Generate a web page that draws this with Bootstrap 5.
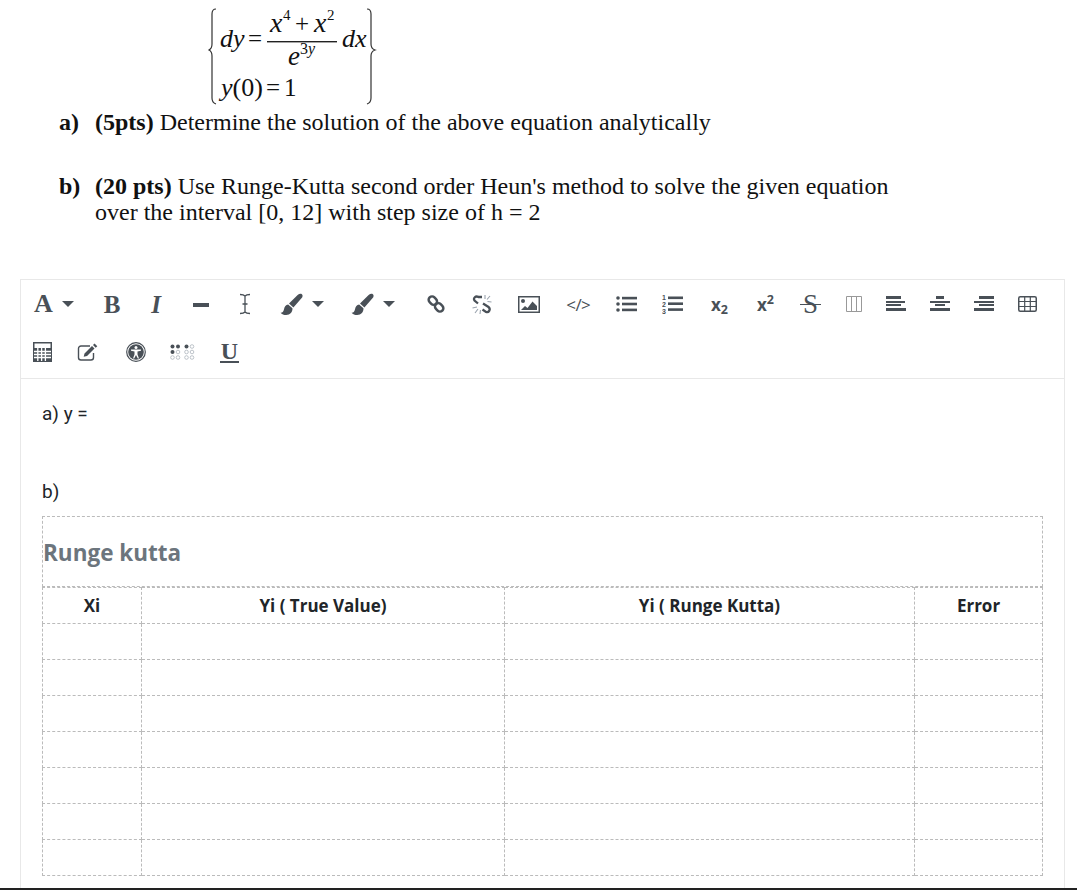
<!DOCTYPE html>
<html lang="en">
<head>
<meta charset="utf-8">
<title>Runge Kutta question</title>
<link href="https://cdn.jsdelivr.net/npm/bootstrap@5.3.0/dist/css/bootstrap.min.css" rel="stylesheet">
<style>
html,body{height:890px;overflow:hidden;background:#fff}
body{font-family:"Open Sans",sans-serif;color:#212529;display:flex;flex-direction:column}
.eq-svg{display:block;margin-left:200px;width:190px;height:108px;flex:none}
.eq-svg text{font-family:"Liberation Serif",serif;fill:#111}
.eq-i{font-style:italic}
.q-item{font-family:"Liberation Serif",serif;font-size:24px;line-height:26px;color:#111;margin-left:59px;width:850px;display:flex}
.q-label{width:36px;flex:none;font-weight:700}
.q-a{margin-top:1px;margin-bottom:38px}
.q-b{margin-bottom:54px}
.editor-box{margin-left:20px;width:1045px;flex:1 1 auto;border:1px solid #e8e8e8;border-bottom:0;min-height:0}
.tool-bar{height:99px;border-bottom:1px solid #e8e8e8;align-content:flex-start}
.tool-btn{height:48px;background:none;border:0;padding:0;color:#495057;display:flex;align-items:center;justify-content:center;gap:9px}
.tool-btn svg{display:block;fill:currentColor}
.w43{width:43.5px}.w42{width:42px}.w44{width:44px}.w45{width:45px}.w46{width:46.5px}.w47{width:47px}.w48{width:48.5px}.w49{width:49.5px}.w66{width:66px}.w72{width:72px}.w70{width:70px}
.w4-gap{margin-right:4px}.w3-gap{margin-right:3px}
.tool-caret{width:0;height:0;border-left:6px solid transparent;border-right:6px solid transparent;border-top:6px solid currentColor}
.serif-glyph{font-family:"Liberation Serif",serif;font-size:25px;font-weight:700;line-height:1}
.serif-a{font-size:26px}
.serif-i{font-style:italic}
.serif-u{font-size:24px;border-bottom:2px solid currentColor;line-height:19px;padding:0 1px}
.strike-glyph{position:relative;font-family:"Liberation Serif",serif;font-size:27px;line-height:1;padding:0 3px}
.strike-glyph::after{content:"";position:absolute;left:0;right:0;top:50%;height:1px;background:currentColor}
.code-glyph{font-family:"Open Sans",sans-serif;font-size:17px;line-height:1;letter-spacing:-.5px}
.sup-glyph{font-family:"Open Sans",sans-serif;font-weight:700;font-size:17px;line-height:1}
.sup-glyph sub,.sup-glyph sup{font-size:12.5px}
.editor-body{padding:21px 21px 0;font-family:Roboto,sans-serif;font-size:19px}
.answer-a{line-height:28px;margin-bottom:50px}
.answer-b{line-height:28px;margin-bottom:10px}
.tbl-wrap{width:1001px}
.tbl-title{font-family:"Open Sans",sans-serif;font-size:22.500px;font-weight:700;color:#6c757d;margin:0;height:71px;line-height:72px;border:1px dashed #bbb}
.sheet{width:1000px;margin:0;table-layout:fixed;border-collapse:collapse}
.sheet th,.sheet td{font-family:"Open Sans",sans-serif;border:1px dashed #bbb;height:36px;padding:0;text-align:center;font-size:17px;font-weight:700;color:#212529;vertical-align:middle}
.col-x{width:99px}.col-t{width:363px}.col-r{width:410px}.col-e{width:128px}
.page-rule{height:2px;background:#222;flex:none}
</style>
</head>
<body>
<svg class="eq-svg" viewBox="200 0 190 108" role="img" aria-label="Initial value problem">
  <g fill="none" stroke="#333" stroke-width="1.2">
    <path d="M216 9c-3 0-4 2-4 5v30c0 3-1 5-3 6 2 1 3 3 3 6v42c0 3 1 5 4 6"/>
    <path d="M367 9c3 0 4 2 4 5v30c0 3 1 5 4 6-3 1-4 3-4 6v42c0 3-1 5-4 6"/>
  </g>
  <text x="220" y="47" font-size="26" class="eq-i">dy</text>
  <text x="248" y="47" font-size="25">=</text>
  <rect x="267" y="41" width="70" height="1.400" fill="#222"/>
  <text x="270" y="32" font-size="28" class="eq-i">x</text>
  <text x="283" y="20" font-size="15">4</text>
  <text x="295" y="32" font-size="25">+</text>
  <text x="314" y="32" font-size="28" class="eq-i">x</text>
  <text x="327" y="20" font-size="15">2</text>
  <text x="288" y="65" font-size="27" class="eq-i">e</text>
  <text x="300" y="54" font-size="16">3<tspan class="eq-i">y</tspan></text>
  <text x="342" y="47" font-size="26" class="eq-i">dx</text>
  <text x="221" y="96" font-size="26"><tspan class="eq-i">y</tspan>(0)</text>
  <text x="266" y="96" font-size="25">=</text>
  <text x="284" y="96" font-size="25">1</text>
</svg>

<div class="q-item q-a"><div class="q-label">a)</div><div><b>(5pts)</b> Determine the solution of the above equation analytically</div></div>
<div class="q-item q-b"><div class="q-label">b)</div><div><b>(20 pts)</b> Use Runge-Kutta second order Heun's method to solve the given equation<br>over the interval [0, 12] with step size of h = 2</div></div>

<div class="editor-box">
  <div class="tool-bar d-flex flex-wrap">
    <button class="tool-btn w66 w3-gap" type="button" aria-label="Font"><span class="serif-glyph serif-a">A</span><span class="tool-caret"></span></button>
    <button class="tool-btn w44" type="button"><span class="serif-glyph">B</span></button>
    <button class="tool-btn w44" type="button"><span class="serif-glyph serif-i">I</span></button>
    <button class="tool-btn w45" type="button" aria-label="Line"><svg width="16" height="16" viewBox="0 0 16 16"><rect x="0" y="7" width="16" height="4"/></svg></button>
    <button class="tool-btn w44" type="button" aria-label="Cursor"><svg width="12" height="22" viewBox="0 0 12 22"><path d="M1 1.500c2 0 4 .3 5 1.500 1-1.200 3-1.500 5-1.500M1 20.500c2 0 4-.3 5-1.500 1 1.200 3 1.500 5 1.500M6 3v16M3.500 11h5" fill="none" stroke="currentColor" stroke-width="1.300"/></svg></button>
    <button class="tool-btn w70" type="button" aria-label="Text colour"><svg width="23" height="23" viewBox="0 0 24 24"><path d="M22.800 1.200c1.200 1 .9 2.800-.2 4.100L14 15 9.400 11l9-8.800c1.400-1.300 3.100-1.900 4.400-1z"/><path d="M8.500 12l4.500 4c.3 3.600-2.400 7-6.600 7-2.300 0-4.500-1-5.800-2.500 2.300.1 3-1.300 3.500-3.300.6-2.700 1.900-5.200 4.400-5.200z"/></svg><span class="tool-caret"></span></button>
    <button class="tool-btn w72 w4-gap" type="button" aria-label="Background colour"><svg width="23" height="23" viewBox="0 0 24 24"><path d="M22.800 1.200c1.200 1 .9 2.800-.2 4.100L14 15 9.400 11l9-8.800c1.400-1.300 3.100-1.900 4.400-1z"/><path d="M8.500 12l4.500 4c.3 3.600-2.400 7-6.600 7-2.300 0-4.500-1-5.800-2.500 2.300.1 3-1.300 3.500-3.300.6-2.700 1.900-5.200 4.400-5.200z"/></svg><span class="tool-caret"></span></button>
    <button class="tool-btn w45" type="button" aria-label="Link"><svg width="18" height="18" viewBox="0 0 20 20"><g fill="none" stroke="currentColor" stroke-width="2.800"><rect x="1.500" y="2.500" width="10" height="7.500" rx="3.700" transform="rotate(45 6.500 6.250)"/><rect x="8.500" y="10" width="10" height="7.500" rx="3.700" transform="rotate(45 13.500 13.750)"/></g></svg></button>
    <button class="tool-btn w47" type="button" aria-label="Unlink"><svg width="20" height="20" viewBox="0 0 20 20"><g fill="none" stroke="currentColor" stroke-width="2.300"><path d="M10 3H6.500C3.500 1.500 1 4 2.500 6.500L6 9.500"/><path d="M11 9.500l5.500 3.500c2.500 2 .5 6-2.500 5l-3.500-2.500"/></g><g stroke="#9aa3ad" stroke-width="1.100"><path d="M13 1v4M18 2l-3 3.500M19.500 8L15.500 7.500M.5 14l4.500-1M3 19l3-4M8 20l.5-4"/></g></svg></button>
    <button class="tool-btn w48" type="button" aria-label="Image"><svg width="22" height="17" viewBox="0 0 22 17"><rect x=".75" y=".75" width="20.500" height="15.500" fill="none" stroke="currentColor" stroke-width="1.500"/><circle cx="5" cy="5" r="2"/><path d="M3 14l4-4 2.500 2 5-6.500L19 10v4z"/></svg></button>
    <button class="tool-btn w49" type="button"><span class="code-glyph">&lt;/&gt;</span></button>
    <button class="tool-btn w46" type="button" aria-label="Bullet list"><svg width="21" height="16" viewBox="0 0 21 16"><circle cx="2" cy="2" r="1.800"/><circle cx="2" cy="8" r="1.800"/><circle cx="2" cy="14" r="1.800"/><rect x="6" y=".8" width="15" height="2.600"/><rect x="6" y="6.700" width="15" height="2.600"/><rect x="6" y="12.600" width="15" height="2.600"/></svg></button>
    <button class="tool-btn w46" type="button" aria-label="Numbered list"><svg width="21" height="20" viewBox="0 0 21 20"><text x="0" y="6" font-size="7" font-weight="700" font-family="Liberation Sans,sans-serif">1</text><text x="0" y="13" font-size="7" font-weight="700" font-family="Liberation Sans,sans-serif">2</text><text x="0" y="20" font-size="7" font-weight="700" font-family="Liberation Sans,sans-serif">3</text><rect x="6" y="2.500" width="15" height="2.600"/><rect x="6" y="8.400" width="15" height="2.600"/><rect x="6" y="14.300" width="15" height="2.600"/></svg></button>
    <button class="tool-btn w47" type="button"><span class="sup-glyph">x<sub>2</sub></span></button>
    <button class="tool-btn w45" type="button"><span class="sup-glyph">x<sup>2</sup></span></button>
    <button class="tool-btn w45" type="button"><span class="strike-glyph">S</span></button>
    <button class="tool-btn w42" type="button" aria-label="Columns"><svg width="16" height="16" viewBox="0 0 16 16"><path d="M.5.5h15v15H.5zM5.500.5v15M10.500.5v15" fill="none" stroke="#999" stroke-width="1"/></svg></button>
    <button class="tool-btn w42" type="button" aria-label="Align left"><svg width="20" height="16" viewBox="0 0 20 16"><rect x="0" y="0" width="15" height="3"/><rect x="0" y="5" width="19" height="2"/><rect x="0" y="8" width="15" height="2"/><rect x="0" y="12" width="20" height="3"/></svg></button>
    <button class="tool-btn w45" type="button" aria-label="Align centre"><svg width="20" height="16" viewBox="0 0 20 16"><rect x="6" y="0" width="8" height="3"/><rect x="0" y="5" width="20" height="2"/><rect x="5" y="8" width="10" height="2"/><rect x="0" y="12" width="20" height="3"/></svg></button>
    <button class="tool-btn w44" type="button" aria-label="Align right"><svg width="20" height="16" viewBox="0 0 20 16"><rect x="5" y="0" width="15" height="3"/><rect x="0" y="5" width="20" height="2"/><rect x="5" y="8" width="15" height="2"/><rect x="0" y="12" width="20" height="3"/></svg></button>
    <button class="tool-btn w43" type="button" aria-label="Table"><svg width="19" height="16" viewBox="0 0 19 16"><rect x=".75" y=".75" width="17.500" height="14.500" rx="1.500" fill="none" stroke="currentColor" stroke-width="1.500"/><path d="M1 5.500h17M1 10.500h17M6.700 1v14M12.300 1v14" stroke="currentColor" stroke-width="1.200" fill="none"/></svg></button>

    <button class="tool-btn w42" type="button" aria-label="Calculator"><svg width="19" height="20" viewBox="0 0 19 20"><rect x=".75" y=".75" width="17.500" height="18.500" fill="none" stroke="currentColor" stroke-width="1.500"/><rect x="1" y="6" width="17" height="13"/><path d="M1 9.500h17M1 12.500h17M1 15.500h17M4.800 6v13M8.600 6v13M12.400 6v13" stroke="#fff" stroke-width="1.300" fill="none"/></svg></button>
    <button class="tool-btn w49" type="button" aria-label="Edit"><svg width="21" height="18" viewBox="0 0 21 18"><path d="M13 3H4a2.500 2.500 0 0 0-2.500 2.500v9A2.500 2.500 0 0 0 4 17h10a2.500 2.500 0 0 0 2.500-2.500V10" fill="none" stroke="currentColor" stroke-width="1.400"/><path d="M7.500 10.500L15 3l2.500 2.500L10 13l-3.300.8zM16 2l1.500-1.500 2.800 2.700-1.600 1.600z"/></svg></button>
    <button class="tool-btn w47" type="button" aria-label="Accessibility"><svg width="20" height="20" viewBox="0 0 20 20"><circle cx="10" cy="10" r="9.300" fill="none" stroke="currentColor" stroke-width="1.200"/><circle cx="10" cy="10" r="7.800"/><circle cx="10" cy="5.500" r="1.500" fill="#fff"/><path d="M5 7.500h10v1.200l-3.500.8v3l1.500 4h-1.200L10 13l-1.800 3.500H7l1.500-4v-3L5 8.700z" fill="#fff"/></svg></button>
    <button class="tool-btn w46" type="button" aria-label="Braille"><svg width="26" height="16" viewBox="0 0 26 16"><g><circle cx="2.500" cy="2.500" r="2"/><circle cx="8" cy="2.500" r="2"/><circle cx="2.500" cy="8" r="2"/><circle cx="16.500" cy="2.500" r="2"/></g><g fill="none" stroke="#adb5bd" stroke-width=".8"><circle cx="8" cy="8" r="1.800"/><circle cx="2.500" cy="13.500" r="1.800"/><circle cx="8" cy="13.500" r="1.800"/><circle cx="22" cy="2.500" r="1.800"/><circle cx="16.500" cy="8" r="1.800"/><circle cx="22" cy="8" r="1.800"/><circle cx="16.500" cy="13.500" r="1.800"/><circle cx="22" cy="13.500" r="1.800"/></g></svg></button>
    <button class="tool-btn w47" type="button"><span class="serif-glyph serif-u">U</span></button>
  </div>
  <div class="editor-body">
    <p class="answer-a">a) y =</p>
    <p class="answer-b">b)</p>
    <div class="tbl-wrap">
      <h2 class="tbl-title">Runge kutta</h2>
      <table class="sheet">
        <colgroup><col class="col-x"><col class="col-t"><col class="col-r"><col class="col-e"></colgroup>
        <tr><th>Xi</th><th>Yi ( True Value)</th><th>Yi ( Runge Kutta)</th><th>Error</th></tr>
        <tr><td></td><td></td><td></td><td></td></tr>
        <tr><td></td><td></td><td></td><td></td></tr>
        <tr><td></td><td></td><td></td><td></td></tr>
        <tr><td></td><td></td><td></td><td></td></tr>
        <tr><td></td><td></td><td></td><td></td></tr>
        <tr><td></td><td></td><td></td><td></td></tr>
        <tr><td></td><td></td><td></td><td></td></tr>
      </table>
    </div>
  </div>
</div>
<div class="page-rule"></div>
<script src="https://cdn.jsdelivr.net/npm/bootstrap@5.3.0/dist/js/bootstrap.bundle.min.js"></script>
</body>
</html>
